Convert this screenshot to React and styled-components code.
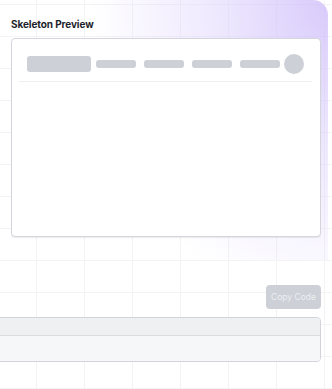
import styled, { createGlobalStyle } from "styled-components";

const GlobalStyle = createGlobalStyle`
  html, body {
    margin: 0;
    padding: 0;
  }

  body {
    font-family: Inter, "Liberation Sans", sans-serif;
    background-color: #ffffff;
    background-image:
      linear-gradient(to right, #f3f3f6 1.5px, transparent 1.5px),
      linear-gradient(to bottom, #f3f3f6 1.5px, transparent 1.5px);
    background-size: 48px 32px;
    background-position: 36px 4px;
  }
`;

const Page = styled.div`
  width: 332px;
  height: 389px;
  overflow: hidden;
  display: flex;
  flex-direction: column;
`;

const PreviewPanel = styled.section`
  width: 328px;
  box-sizing: border-box;
  padding: 16px 7px 23px 11px;
  border-top-right-radius: 15px;
  background: radial-gradient(
    ellipse 85% 140% at 100% 0%,
    rgba(204, 186, 250, 0.75) 0%,
    rgba(218, 205, 252, 0.45) 40%,
    rgba(255, 255, 255, 0) 85%
  );
`;

const Title = styled.h2`
  margin: 1px 0 7px 0;
  font-size: 10px;
  line-height: 14px;
  letter-spacing: -0.1px;
  font-weight: 700;
  color: #1d1f2c;
`;

const PreviewCard = styled.div`
  height: 199px;
  box-sizing: border-box;
  background: #ffffff;
  border: 1px solid #d5d6dc;
  border-radius: 4px;
  box-shadow: 0 1px 1px rgba(20, 20, 40, 0.08);
  padding: 8px 8px 0 7px;
`;

const SkeletonNav = styled.div`
  display: flex;
  align-items: center;
  padding: 7px 8px 7px 8px;
  border-bottom: 1px solid #f0f0f2;
`;

const Bone = styled.div`
  background: #cdd0d6;
  border-radius: ${(p) => (p.$round ? "50%" : "3px")};
  width: ${(p) => p.$w}px;
  height: ${(p) => p.$h}px;
  flex-shrink: 0;
`;

const Links = styled.div`
  display: flex;
  gap: 8px;
  margin: 0 4px 0 5px;
`;

const CodeSection = styled.div`
  display: flex;
  flex-direction: column;
  align-items: flex-end;
  padding: 25px 11px 0 0;
`;

const CopyButton = styled.button`
  all: unset;
  width: 55px;
  height: 24px;
  box-sizing: border-box;
  display: flex;
  align-items: center;
  justify-content: center;
  background: #cdd0d7;
  border-radius: 4px;
  color: #eceef1;
  font-family: Inter, "Liberation Sans", sans-serif;
  font-size: 8.5px;
`;

const CodeBlock = styled.div`
  margin-top: 8px;
  width: 340px;
  box-sizing: border-box;
  border: 1px solid #d3d4da;
  border-radius: 4px;
  overflow: hidden;
`;

const CodeHeader = styled.div`
  height: 17px;
  background: #eff0f2;
  border-bottom: 1.5px solid #dcdde2;
`;

const CodeBody = styled.div`
  height: 25px;
  background: #f6f7f9;
`;

function App() {
  return (
    <>
      <GlobalStyle />
      <Page>
        <PreviewPanel>
          <Title>Skeleton Preview</Title>
          <PreviewCard>
            <SkeletonNav>
              <Bone $w={64} $h={16} />
              <Links>
                <Bone $w={40} $h={8} />
                <Bone $w={40} $h={8} />
                <Bone $w={40} $h={8} />
                <Bone $w={40} $h={8} />
              </Links>
              <Bone $w={20} $h={20} $round />
            </SkeletonNav>
          </PreviewCard>
        </PreviewPanel>
        <CodeSection>
          <CopyButton>Copy Code</CopyButton>
          <CodeBlock>
            <CodeHeader />
            <CodeBody />
          </CodeBlock>
        </CodeSection>
      </Page>
    </>
  );
}

export default App;
